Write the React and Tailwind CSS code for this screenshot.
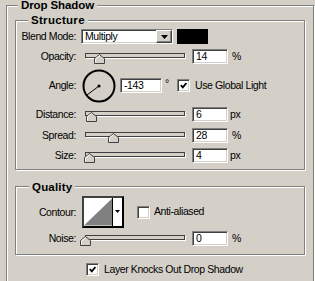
import React from 'react';

const sunken =
  'border border-t-[#808080] border-l-[#808080] border-b-white border-r-white shadow-[inset_1px_1px_0_#404040,inset_-1px_-1px_0_#d4d0c8] bg-white';
const etched = 'relative border border-[#808080] shadow-[1px_1px_0_#fff,inset_1px_1px_0_#fff]';

function Legend({ children, className }) {
  return (
    <span className={`absolute h-[15px] px-[3px] bg-[#d4d0c8] text-[11.5px] leading-[15px] font-bold ${className}`}>
      {children}
    </span>
  );
}

function Label({ children }) {
  return <span className="w-[60px] shrink-0 text-right leading-[15px]">{children}</span>;
}

function Field({ value, width = 'w-[36px]', ml = 'ml-[7px]' }) {
  return (
    <div className={`${sunken} ${width} ${ml} h-[15px] shrink-0 pl-[3px] leading-[13px]`}>{value}</div>
  );
}

function Slider({ value }) {
  return (
    <div className="relative w-[100px] h-[5px] ml-[9px] mb-[2px] shrink-0 border border-[#404040] bg-[#d4d0c8] shadow-[1px_1px_0_#fff]">
      <svg className="absolute top-0" style={{ left: value - 6 }} width="11" height="10" viewBox="0 0 11 10">
        <path d="M0.5 9.5V4.5L5.5 0.5L10.5 4.5V9.5Z" fill="#d4d0c8" stroke="#404040" />
        <path d="M1.5 8.5V4.9L5.5 1.7" fill="none" stroke="#fff" />
      </svg>
    </div>
  );
}

function Checkbox({ checked }) {
  return (
    <div className={`${sunken} w-[13px] h-[13px] shrink-0 flex items-center justify-center`}>
      {checked && (
        <svg width="7" height="7" viewBox="0 0 7 7">
          <path d="M0.8 3.2L2.8 5.4L6.4 1" fill="none" stroke="#000" strokeWidth="1.8" />
        </svg>
      )}
    </div>
  );
}

function SliderRow({ label, value, unit, mt }) {
  return (
    <div className={`flex items-center h-[15px] ${mt}`}>
      <Label>{label}</Label>
      <Slider value={value} />
      <Field value={value} />
      <span className={unit === '%' ? 'ml-[4px]' : 'ml-[2px]'}>{unit}</span>
    </div>
  );
}

export default function App() {
  return (
    <div
      className="w-[315px] h-[281px] overflow-hidden bg-[#d4d0c8] pt-[5px] pl-[6px] text-black text-[10.5px] tracking-[-0.4px]"
      style={{ fontFamily: '"Liberation Sans", Arial, sans-serif' }}
    >
      {/* Drop Shadow */}
      <div className={`${etched} w-[308px] h-[300px]`}>
        <Legend className="left-[11px] top-[-8px] tracking-[-0.1px]">Drop Shadow</Legend>

        {/* Structure */}
        <div className={`${etched} ml-[8px] mt-[14px] w-[290px] h-[150px]`}>
          <Legend className="left-[12px] top-[-8px] tracking-[0.3px]">Structure</Legend>

          <div className="flex items-center h-[15px] mt-[8px]">
            <Label>Blend Mode:</Label>
            <div className={`${sunken} ml-[5px] w-[92px] h-[15px] flex`}>
              <span className="flex-1 pl-[3px] leading-[13px]">Multiply</span>
              <div className="w-[16px] h-[13px] border border-t-white border-l-white border-b-[#404040] border-r-[#404040] bg-[#d4d0c8] shadow-[inset_-1px_-1px_0_#808080] flex items-center justify-center">
                <svg width="7" height="4" viewBox="0 0 7 4">
                  <path d="M0 0H7L3.5 4Z" fill="#000" />
                </svg>
              </div>
            </div>
            <div className="ml-[4px] w-[31px] h-[15px] bg-black" />
          </div>

          <SliderRow label="Opacity:" value={14} unit="%" mt="mt-[5px]" />

          <div className="flex items-center h-[33px] mt-[5px]">
            <Label>Angle:</Label>
            <svg className="ml-[6px] shrink-0" width="34" height="34" viewBox="0 0 34 34">
              <circle cx="17" cy="17" r="15.5" fill="none" stroke="#000" strokeWidth="2" />
              <line x1="17" y1="17" x2="5" y2="26" stroke="#000" strokeWidth="1" />
              <circle cx="17" cy="17" r="1.6" fill="#000" />
            </svg>
            <Field value="-143" width="w-[42px]" ml="ml-[4px]" />
            <span className="ml-[3px] w-[12px] self-start mt-[9px] leading-[10px]">°</span>
            <Checkbox checked />
            <span className="ml-[5px]">Use Global Light</span>
          </div>

          <SliderRow label="Distance:" value={6} unit="px" mt="mt-[5px]" />
          <SliderRow label="Spread:" value={28} unit="%" mt="mt-[6px]" />
          <SliderRow label="Size:" value={4} unit="px" mt="mt-[5px]" />
        </div>

        {/* Quality */}
        <div className={`${etched} ml-[8px] mt-[16px] w-[290px] h-[69px]`}>
          <Legend className="left-[13px] top-[-7px] tracking-[0.2px]">Quality</Legend>

          <div className="flex items-center h-[32px] mt-[9px]">
            <Label>Contour:</Label>
            <div className="ml-[6px] w-[42px] h-[32px] flex border-2 border-t-[#404040] border-l-[#404040] border-b-black border-r-black bg-white">
              <svg width="29" height="28" viewBox="0 0 29 28" className="shrink-0 border-r border-black">
                <polygon points="0,28 29,0 29,28" fill="#808080" />
              </svg>
              <div className="flex-1 flex items-center justify-center pb-[2px]">
                <svg width="5" height="3" viewBox="0 0 5 3">
                  <path d="M0 0H5L2.5 3Z" fill="#000" />
                </svg>
              </div>
            </div>
            <div className="ml-[13px]">
              <Checkbox />
            </div>
            <span className="ml-[4px]">Anti-aliased</span>
          </div>

          <SliderRow label="Noise:" value={0} unit="%" mt="mt-[3px]" />
        </div>

        <div className="flex items-center mt-[7px] ml-[79px]">
          <Checkbox checked />
          <span className="ml-[5px]">Layer Knocks Out Drop Shadow</span>
        </div>
      </div>
    </div>
  );
}
